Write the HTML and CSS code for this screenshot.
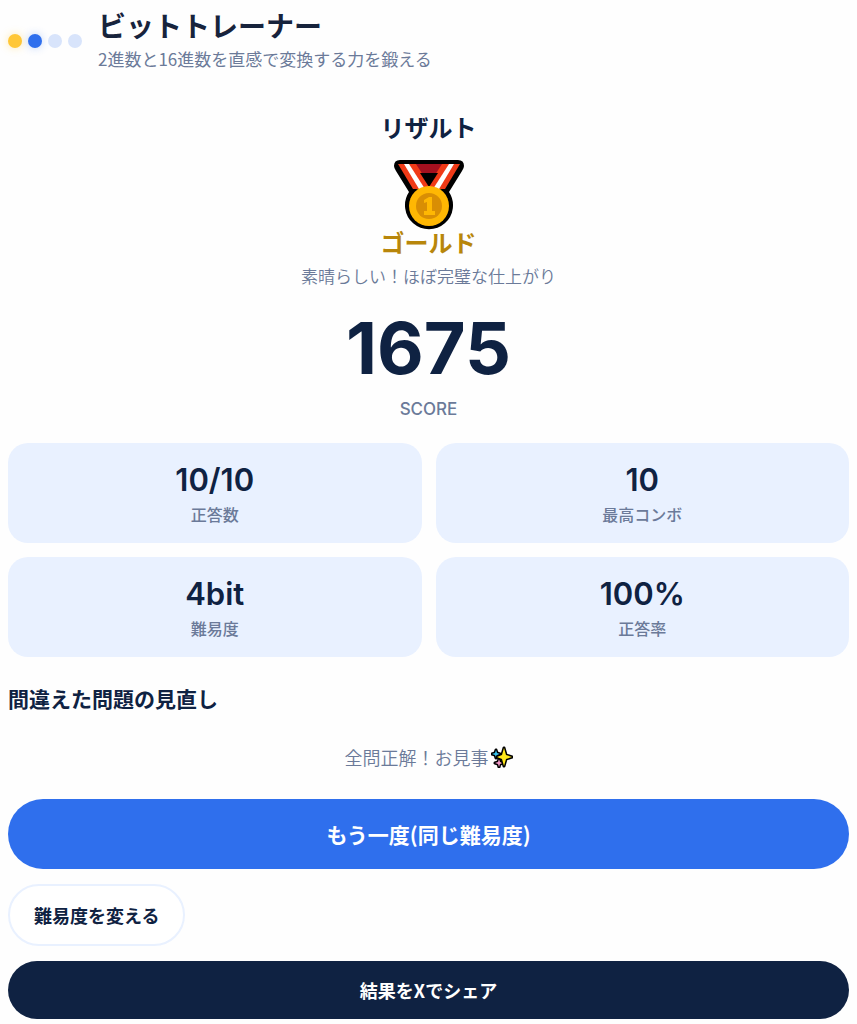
FILE: index.html
```html
<!DOCTYPE html>
<html lang="ja">
  <head>
    <meta charset="UTF-8" />
    <meta name="viewport" content="width=device-width, initial-scale=1.0" />
    <title>ビットトレーナー</title>
    <link rel="stylesheet" href="styles.css">
  </head>
  <body>
    <header class="header">
      <div class="bits">
        <span class="bit bit-gold"></span>
        <span class="bit bit-blue"></span>
        <span class="bit"></span>
        <span class="bit"></span>
      </div>
      <div>
        <h1>ビットトレーナー</h1>
        <p class="tagline">2進数と16進数を直感で変換する力を鍛える</p>
      </div>
    </header>
    <main>
      <section class="result">
        <h2>リザルト</h2>
        <svg class="medal" viewBox="0 0 72 72" role="img" aria-label="金メダル">
          <path d="M7 1h58q6 0 6 6 0 2-2 5L56 33a24 24 0 1 1-40 0L3 12Q1 9 1 7q0-6 6-6z" fill="#000" />
          <path d="M21 5h30v9H21z" fill="#a4101f" />
          <path d="M5 5h18l16 25H20z" fill="#f03a17" />
          <path d="M67 5H49L33 30h19z" fill="#f03a17" />
          <path d="M11 5h5l16 25h-6z" fill="#fff" />
          <path d="M61 5h-5L40 30h6z" fill="#fff" />
          <path d="M27 14h18l-9 14z" fill="#000" />
          <circle cx="36" cy="47" r="20" fill="#ffb703" />
          <circle cx="36" cy="47" r="13" fill="#d98e04" />
          <path d="M31 41l5-3h3v14h3v4H31v-4h3v-9l-3 1z" fill="#ffb703" />
        </svg>
        <div class="rank">ゴールド</div>
        <p class="comment">素晴らしい！ほぼ完璧な仕上がり</p>
        <div class="score">1675</div>
        <div class="score-label">SCORE</div>
      </section>
      <section class="stats">
        <div class="stat">
          <div class="stat-value">10/10</div>
          <div class="stat-label">正答数</div>
        </div>
        <div class="stat">
          <div class="stat-value">10</div>
          <div class="stat-label">最高コンボ</div>
        </div>
        <div class="stat">
          <div class="stat-value">4bit</div>
          <div class="stat-label">難易度</div>
        </div>
        <div class="stat">
          <div class="stat-value">100%</div>
          <div class="stat-label">正答率</div>
        </div>
      </section>
      <section class="review">
        <h3>間違えた問題の見直し</h3>
        <p class="perfect">
          全問正解！お見事<svg class="sparkles" viewBox="0 0 22 22" aria-hidden="true">
            <g stroke="#000" stroke-width="3" stroke-linejoin="round" paint-order="stroke">
              <path d="M5 4l1 3 3 1-3 1-1 3-1-3-3-1 3-1z" fill="#35c5f0" />
              <path d="M8 13l1 3 3 1-3 1-1 3-1-3-3-1 3-1z" fill="#f59ac8" />
              <path d="M13 2l2 7 6 2-6 2-2 7-2-7-5-2 5-2z" fill="#ffe81a" />
            </g>
          </svg>
        </p>
      </section>
      <div class="actions">
        <button type="button" class="btn btn-primary">もう一度(同じ難易度)</button>
        <button type="button" class="btn btn-outline">難易度を変える</button>
        <button type="button" class="btn btn-share">結果をXでシェア</button>
      </div>
    </main>
  </body>
</html>
```
FILE: styles.css
```css
* {
  margin: 0;
  padding: 0;
  box-sizing: border-box;
}
body {
  padding: 8px;
  font-family: "Noto Sans CJK JP", sans-serif;
  background-color: #fefefe;
  color: #0f2242;
}
.header {
  display: flex;
  align-items: center;
  gap: 16px;
}
.bits {
  display: flex;
  gap: 6px;
}
.bit {
  width: 14px;
  height: 14px;
  border-radius: 50%;
  background-color: #d8e4fb;
}
.bit-gold {
  background-color: #ffc737;
  box-shadow: 0 0 8px rgba(255, 199, 55, 0.4);
}
.bit-blue {
  background-color: #2f6fed;
  box-shadow: 0 0 8px rgba(47, 111, 237, 0.3);
}
h1 {
  font-size: 28px;
  line-height: 34px;
  color: #17233c;
}
.tagline {
  margin-top: 3px;
  font-size: 17px;
  line-height: 28px;
  color: #6b7a99;
}
.result {
  display: flex;
  flex-direction: column;
  align-items: center;
  padding: 36px 0 20px;
}
h2,
.rank {
  font-size: 24px;
  line-height: 36px;
  font-weight: bold;
}
.medal {
  width: 72px;
  height: 72px;
  margin-top: 14px;
}
.rank {
  line-height: 22px;
  color: #b8860b;
}
.comment {
  margin-top: 9px;
  font-size: 17px;
  line-height: 28px;
  font-weight: 350;
  color: #6b7a99;
}
.score {
  margin-top: 20px;
  font-family: Inter, sans-serif;
  font-size: 72px;
  line-height: 76px;
  font-weight: bold;
}
.score-label {
  margin-top: 9px;
  font-family: Inter, sans-serif;
  font-size: 17px;
  line-height: 28px;
  font-weight: 500;
  color: #6b7a99;
}
.stats {
  display: grid;
  grid-template-columns: 1fr 1fr;
  gap: 14px;
}
.stat {
  padding: 17px 14px;
  border-radius: 20px;
  background-color: #e9f1ff;
  text-align: center;
}
.stat-value {
  margin-bottom: 2px;
  font-family: Inter, sans-serif;
  font-size: 31px;
  line-height: 40px;
  font-weight: 600;
}
.stat-label {
  font-size: 16px;
  line-height: 24px;
  font-weight: 500;
  color: #6b7a99;
}
.review {
  padding: 24px 0 28px;
}
h3 {
  font-size: 21px;
  line-height: 34px;
}
.perfect {
  display: flex;
  align-items: center;
  justify-content: center;
  gap: 2px;
  margin-top: 28px;
  font-size: 18px;
  line-height: 28px;
  font-weight: 350;
  color: #6b7a99;
}
.sparkles {
  width: 22px;
  height: 22px;
}
.actions {
  display: flex;
  flex-direction: column;
  align-items: flex-start;
  gap: 15px;
}
.btn {
  border: none;
  border-radius: 36px;
  font-family: inherit;
  font-size: 18px;
  line-height: 28px;
  font-weight: bold;
  color: #fff;
  cursor: pointer;
}
.btn-primary {
  width: 100%;
  padding: 21px;
  font-size: 21px;
  background-color: #2f6fed;
}
.btn-outline {
  padding: 15px 24px;
  border: 2px solid #e9f1ff;
  background-color: #fff;
  color: #0f2242;
}
.btn-share {
  width: 100%;
  padding: 15px;
  background-color: #0f2242;
}
```
